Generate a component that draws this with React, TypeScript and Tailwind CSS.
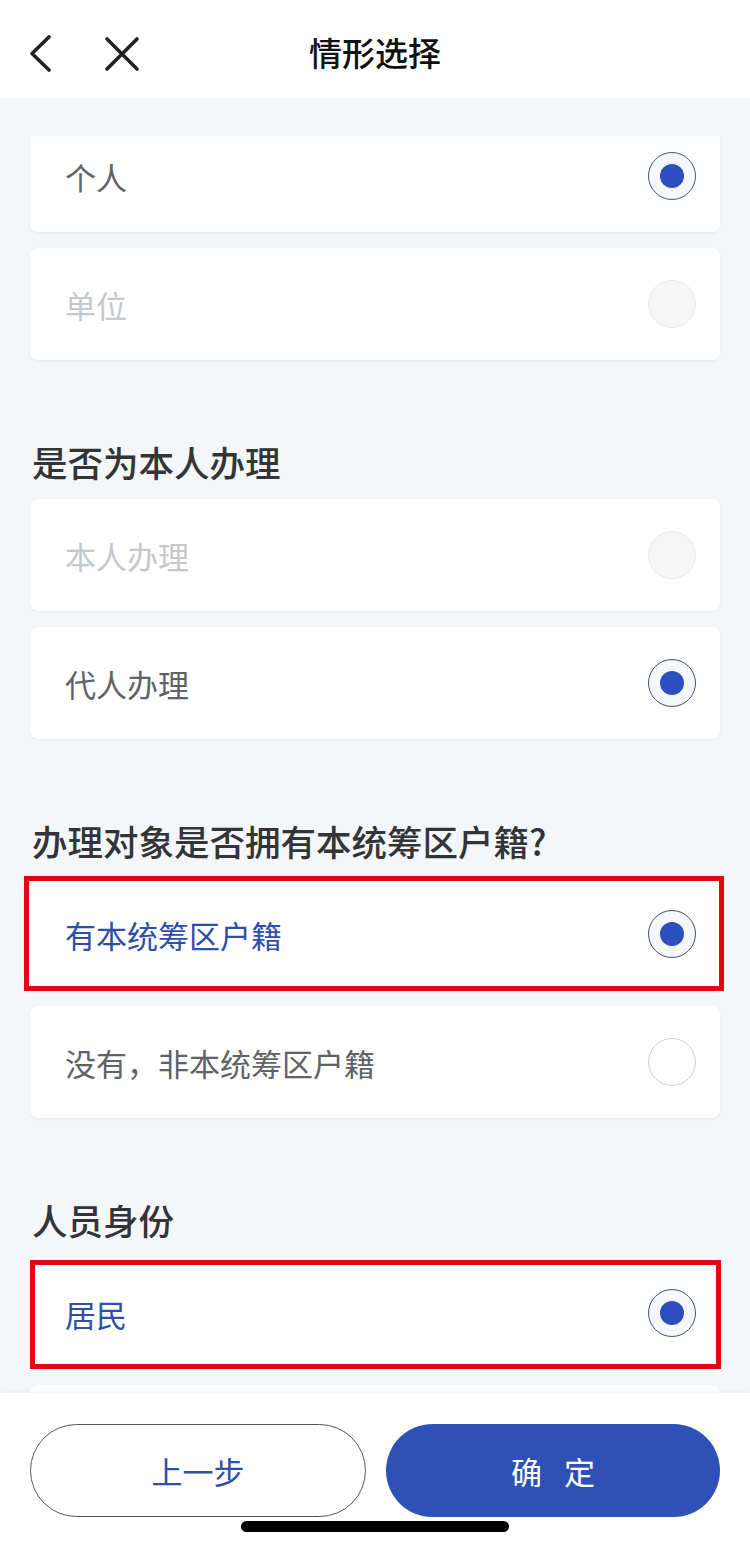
import React from "react";

type RadioState = "on" | "off" | "disabled";

function Radio({ state }: { state: RadioState }) {
  if (state === "on") {
    return (
      <div className="flex h-[48px] w-[48px] shrink-0 items-center justify-center rounded-full border border-[#4a5068] bg-[#f5f7fb]">
        <div className="h-[24px] w-[24px] rounded-full bg-[#2b4fbd]" />
      </div>
    );
  }
  if (state === "disabled") {
    return <div className="h-[48px] w-[48px] shrink-0 rounded-full border border-[#ebebeb] bg-[#f6f6f7]" />;
  }
  return <div className="h-[48px] w-[48px] shrink-0 rounded-full border border-[#cfcfcf] bg-white" />;
}

function Card({
  label,
  state,
  tone,
  mark,
}: {
  label: string;
  state: RadioState;
  tone: "gray" | "blue" | "light";
  mark?: "a" | "b";
}) {
  const color =
    tone === "blue" ? "text-[#2f4ea8]" : tone === "light" ? "text-[#c6c7c9]" : "text-[#606266]";
  return (
    <div className="relative flex h-[112px] items-center justify-between rounded-[8px] bg-white pl-[35px] pr-[24px] shadow-[0_1px_3px_rgba(0,0,0,0.06)]">
      <span className={`text-[31px] leading-none ${color}`}>{label}</span>
      <Radio state={state} />
      {mark === "a" && (
        <div className="pointer-events-none absolute -bottom-[1px] -left-[6px] -right-[4px] -top-[2px] border-[5px] border-[#e30613]" />
      )}
      {mark === "b" && (
        <div className="pointer-events-none absolute bottom-0 left-0 right-[-1px] top-[3px] border-[5px] border-[#e30613]" />
      )}
    </div>
  );
}

function SectionTitle({ children }: { children: React.ReactNode }) {
  return (
    <div className="mt-[84px] mb-[19px] pl-[2px] text-[35.5px] font-medium leading-[36px] text-[#333438]">
      {children}
    </div>
  );
}

export default function App() {
  return (
    <div
      className="relative flex h-[1548px] w-[750px] flex-col overflow-hidden bg-[#f5f6f8]"
      style={{ fontFamily: '"Noto Sans CJK SC", "Noto Sans", sans-serif' }}
    >
      {/* Header */}
      <div className="relative flex h-[98px] shrink-0 items-center justify-center bg-white pt-[6px]">
        <div className="absolute left-[28px] top-[35px] flex items-center gap-[50px]">
          <svg width="26" height="37" viewBox="0 0 26 37" fill="none">
            <path d="M21 2 L4 18.5 L21 35" stroke="#222" strokeWidth="3.6" strokeLinecap="round" strokeLinejoin="round" />
          </svg>
          <svg width="36" height="36" viewBox="0 0 36 36" fill="none">
            <path d="M3 3 L33 33 M33 3 L3 33" stroke="#222" strokeWidth="3.6" strokeLinecap="round" />
          </svg>
        </div>
        <span className="text-[33px] font-medium leading-none text-[#111]">情形选择</span>
      </div>

      {/* Content */}
      <div className="h-[38px] shrink-0" />
      <div className="flex-1 overflow-hidden px-[30px]">
        <div className="-mt-[16px] flex flex-col">
          <div className="flex flex-col gap-[16px]">
            <Card label="个人" state="on" tone="gray" />
            <Card label="单位" state="disabled" tone="light" />
          </div>

          <SectionTitle>是否为本人办理</SectionTitle>
          <div className="flex flex-col gap-[16px]">
            <Card label="本人办理" state="disabled" tone="light" />
            <Card label="代人办理" state="on" tone="gray" />
          </div>

          <SectionTitle>办理对象是否拥有本统筹区户籍?</SectionTitle>
          <div className="flex flex-col gap-[16px]">
            <Card label="有本统筹区户籍" state="on" tone="blue" mark="a" />
            <Card label="没有，非本统筹区户籍" state="off" tone="gray" />
          </div>

          <SectionTitle>人员身份</SectionTitle>
          <div className="flex flex-col gap-[16px]">
            <Card label="居民" state="on" tone="blue" mark="b" />
            <Card label="" state="off" tone="gray" />
          </div>
        </div>
      </div>

      {/* Footer */}
      <div className="relative h-[155px] shrink-0 bg-white shadow-[0_-2px_4px_rgba(0,0,0,0.03)]">
        <div className="flex gap-[20px] px-[30px] pt-[31px]">
          <button className="flex h-[93px] flex-1 items-center justify-center rounded-full border border-[#55575e] bg-white text-[31px] leading-none text-[#2f4ea8]">
            上一步
          </button>
          <button className="flex h-[93px] flex-1 items-center justify-center gap-[22px] rounded-full bg-[#2e50b7] text-[31px] leading-none text-white">
            <span>确</span>
            <span>定</span>
          </button>
        </div>
        <div className="absolute bottom-[16px] left-[241px] h-[11px] w-[268px] rounded-full bg-black" />
      </div>
    </div>
  );
}
